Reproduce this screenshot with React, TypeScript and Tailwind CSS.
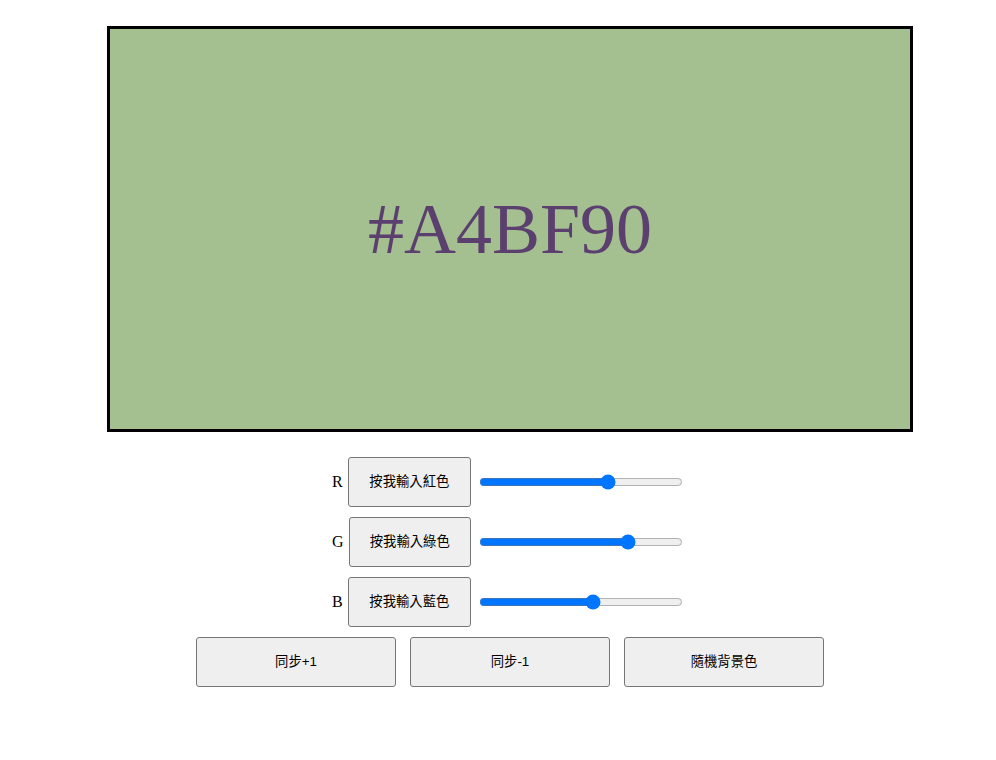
import React, { useState } from "react";

const hex = (n: number) => n.toString(16).toUpperCase().padStart(2, "0");

export default function App() {
  const [r, setR] = useState(164);
  const [g, setG] = useState(191);
  const [b, setB] = useState(144);
  const code = `#${hex(r)}${hex(g)}${hex(b)}`;
  const inv = `#${hex(255 - r)}${hex(255 - g)}${hex(255 - b)}`;

  const rows: { label: string; text: string; v: number; set: (n: number) => void }[] = [
    { label: "R", text: "按我輸入紅色", v: r, set: setR },
    { label: "G", text: "按我輸入綠色", v: g, set: setG },
    { label: "B", text: "按我輸入藍色", v: b, set: setB },
  ];

  const btn =
    "bg-[#efefef] border border-[#767676] rounded-[3px] text-black text-[13.333px] [font-family:'Liberation_Sans','Noto_Sans_CJK_TC',sans-serif] flex items-center justify-center";

  return (
    <div className="min-h-[760px] bg-white pl-[24px] pt-[26px] flex flex-col items-center">
      <div
        className="w-[806px] h-[406px] border-[3px] border-black flex items-center justify-center"
        style={{ backgroundColor: code }}
      >
        <span
          className="text-[72px] leading-none [font-family:'Liberation_Serif',serif]"
          style={{ color: inv }}
        >
          {code}
        </span>
      </div>

      <div className="w-[356px] mt-[25px] flex flex-col gap-[10px]">
        {rows.map((row) => (
          <div key={row.label} className="flex items-center h-[50px]">
            <div className="w-[139px] flex items-center">
              <span className="text-[16px] text-black [font-family:'Liberation_Serif',serif]">
                {row.label}
              </span>
              <button className={`${btn} ml-[5px] flex-1 h-[50px]`}>{row.text}</button>
            </div>
            <input
              type="range"
              min={0}
              max={255}
              value={row.v}
              onChange={(e) => row.set(Number(e.target.value))}
              className="ml-[8px] w-[204px] m-0 accent-[#0075ff]"
            />
          </div>
        ))}
      </div>

      <div className="mt-[10px] flex gap-[14px]">
        <button className={`${btn} w-[200px] h-[50px]`}>同步+1</button>
        <button className={`${btn} w-[200px] h-[50px]`}>同步-1</button>
        <button className={`${btn} w-[200px] h-[50px]`}>隨機背景色</button>
      </div>
    </div>
  );
}
